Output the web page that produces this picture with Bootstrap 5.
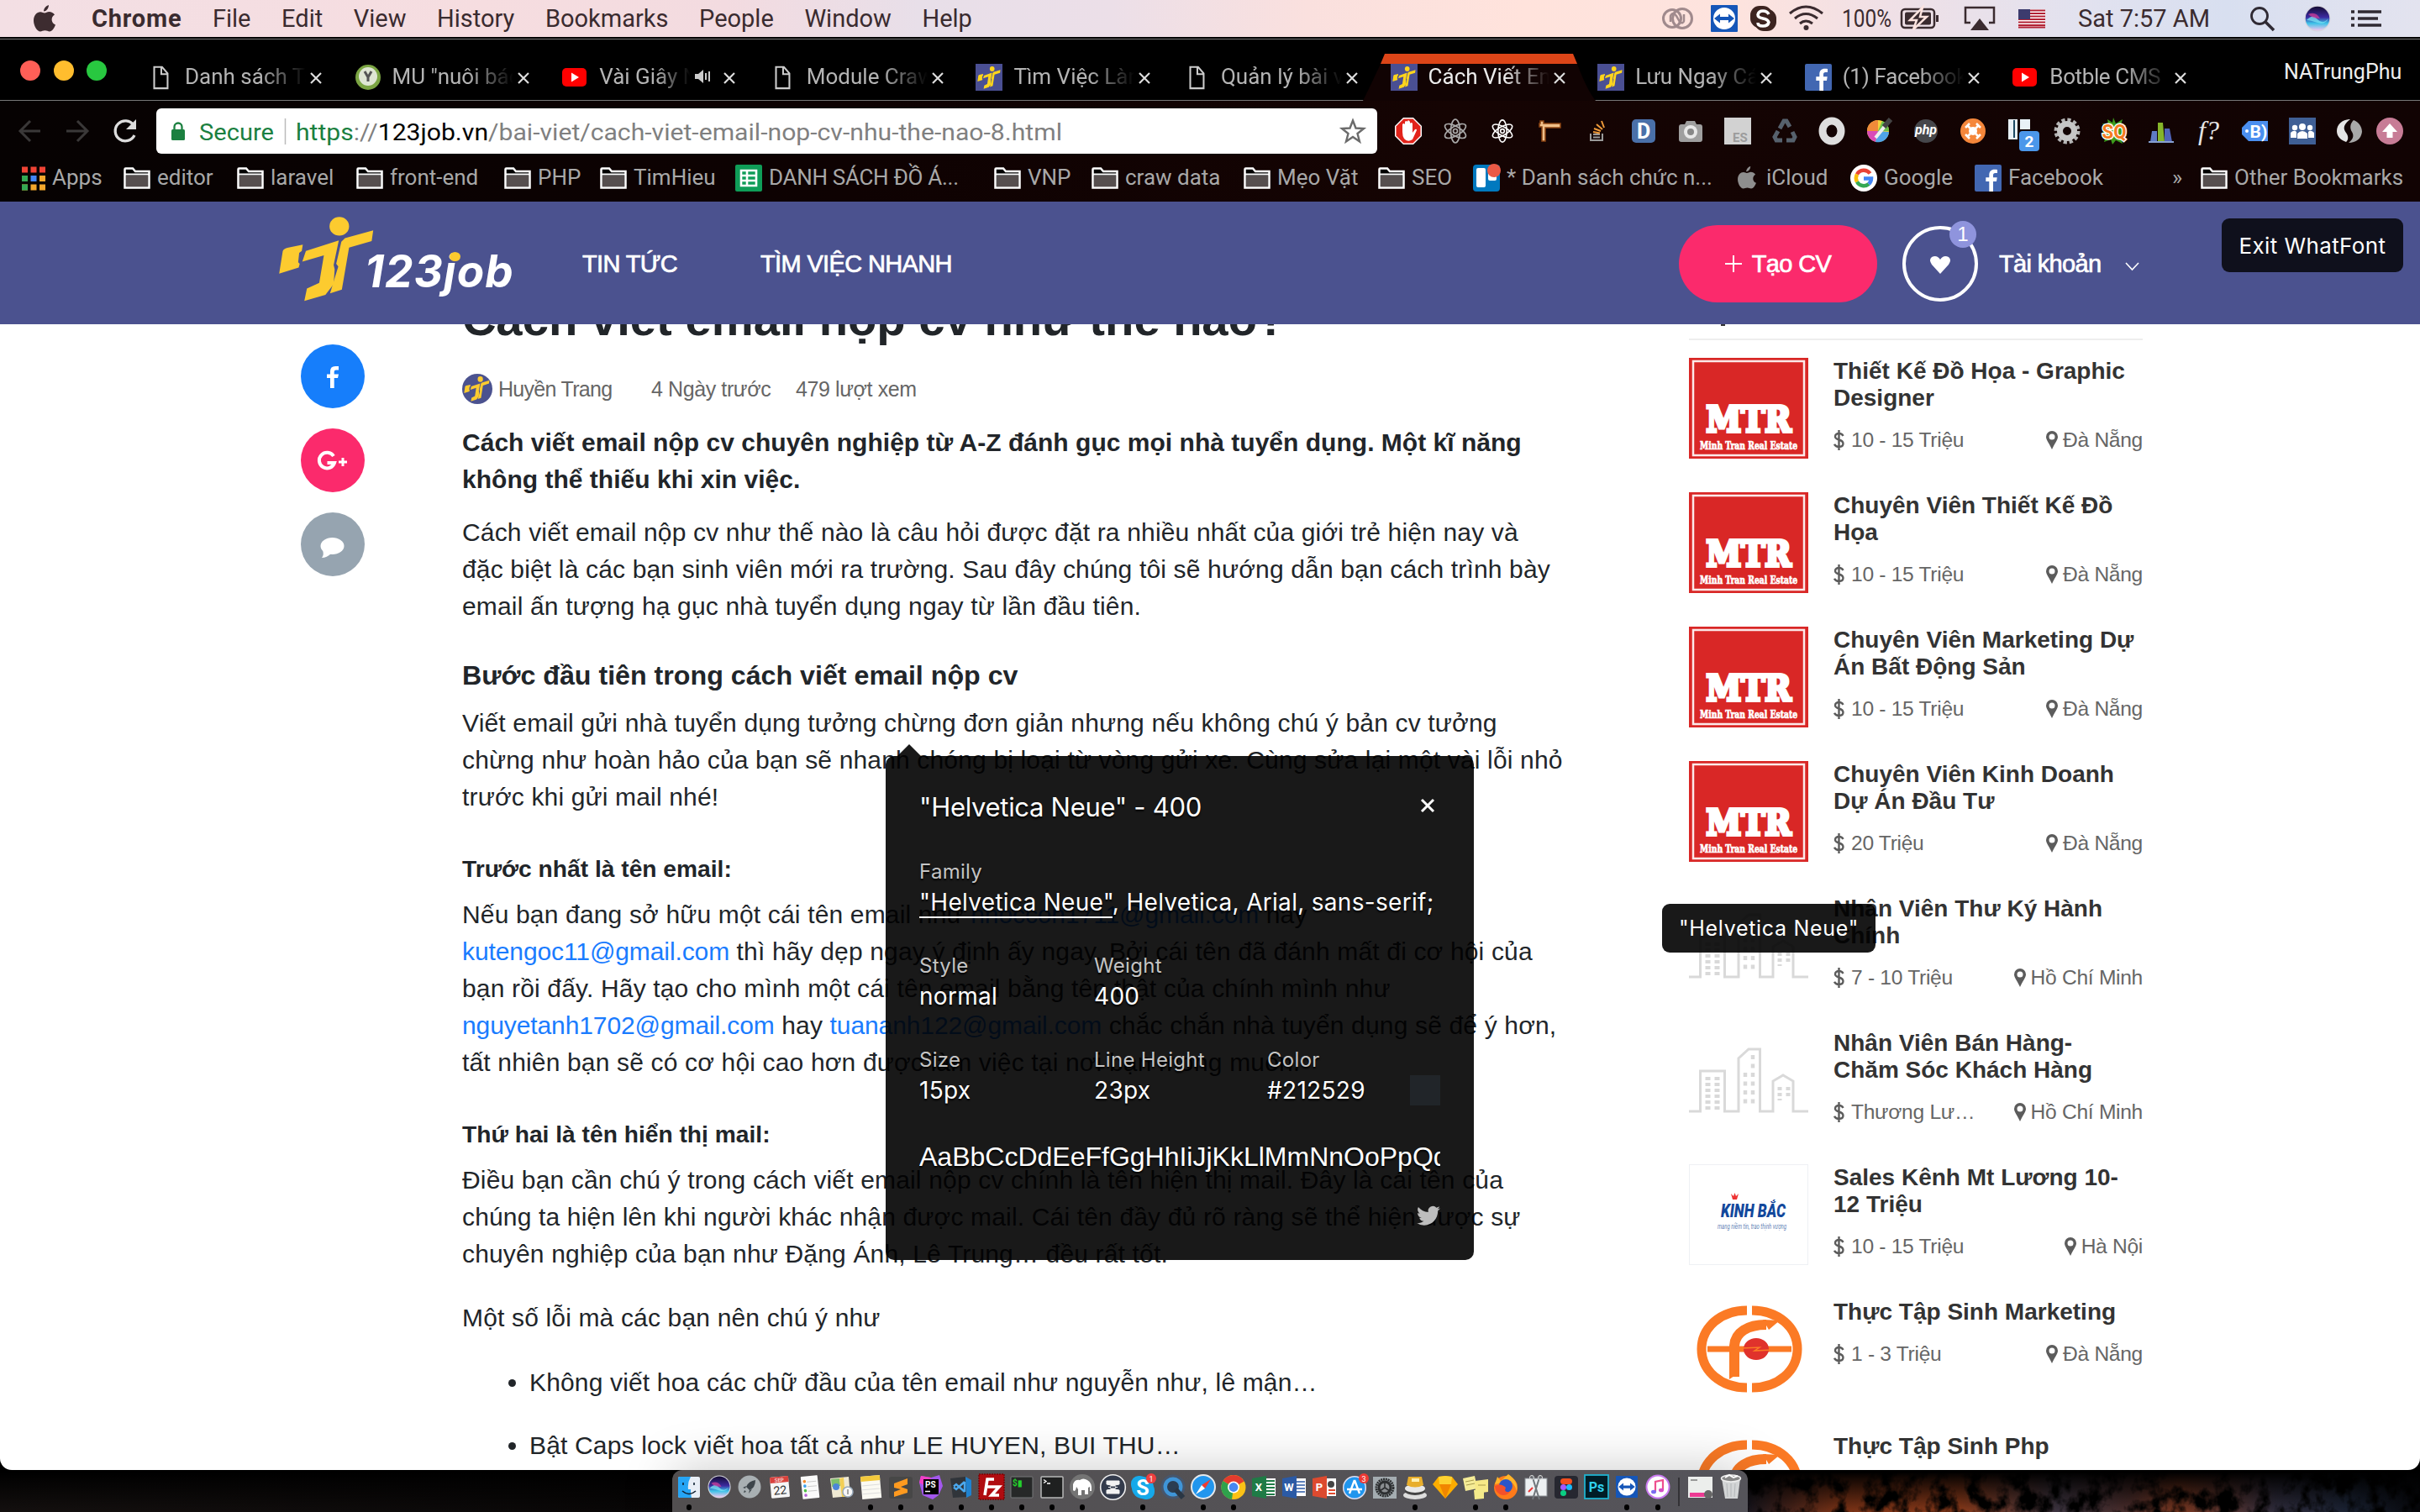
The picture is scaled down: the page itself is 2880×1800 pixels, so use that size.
<!DOCTYPE html>
<html lang="vi">
<head>
<meta charset="utf-8">
<title>Cách viết email nộp cv như thế nào?</title>
<link href="https://cdn.jsdelivr.net/npm/bootstrap@5.3.0/dist/css/bootstrap.min.css" rel="stylesheet">
<style>
html,body{margin:0;width:2880px;height:1800px;overflow:hidden;background:#000}
body{font-family:"Liberation Sans",Arial,sans-serif;color:#212529;line-height:1.2}
svg{display:block;flex:none;overflow:visible}
svg text{font-family:Roboto,Inter,sans-serif}
.sys{font-family:Roboto,Inter,sans-serif}
.nw{white-space:nowrap}
/* menu bar */
.menubar{height:44px;font-size:29px;color:#3a2b2f;padding-left:40px;background:linear-gradient(90deg,#f3dfe4 0,#f6dde0 20%,#f3dbe0 30%,#e8dfe9 38%,#ecdfe8 46%,#fae0de 54%,#ffe3dc 63%,#fde3de 72%,#f0e0e6 78%,#e2e2ef 86%,#d8dff0 92%,#e3e3ef 100%)}
.menubar .menus>span{margin-right:36.6px}
.menubar .menus>span:first-child{letter-spacing:.8px}
/* tabs */
.tabstrip{height:76px;border-top:2px solid #000;position:relative;padding-left:175px;background:#000;box-shadow:inset 0 1px 0 #777,inset 0 -1px 0 #777}
.lights{position:absolute;left:24px;top:26px;gap:15.5px}
.lights i{width:24px;height:24px;border-radius:50%}
.btab{width:246.6px;height:72px;padding-top:20px;position:relative;color:#b4b4b4;font-size:26px}
.btab .tt{width:150px;overflow:hidden;margin-left:13px;margin-top:2px;-webkit-mask-image:linear-gradient(90deg,#000 60%,transparent 96%);mask-image:linear-gradient(90deg,#000 60%,transparent 96%)}
.btab .cl{margin-top:20px;margin-left:-1px}
.btab.on{color:#ececec}
.btab>*{position:relative}
.btab .shape{position:absolute;left:-33px;top:18px}
.user{position:absolute;left:2718px;top:25px;font-size:25px;color:#eee}
/* toolbar */
.browserbar{height:120px;background:linear-gradient(90deg,#060202,#0e0202 35%,#150403 60%,#110303)}
.toolbar{height:72px;padding-left:22px}
.omni{width:1453px;height:54px;background:#fff;border-radius:6px;font-size:28px;padding:0 12px 0 17px;color:#808080}
.exts{gap:24px;margin-left:21px}
.exts svg:last-child{margin-left:-8px}
.marks{height:39px;color:#a8a8a8;font-size:26px;padding-left:26px;position:relative}
.marks>div{display:flex;align-items:center;gap:8px;flex:none;white-space:nowrap}
.marks>div:nth-child(1){width:121px}.marks>div:nth-child(2){width:135px}.marks>div:nth-child(3){width:142px}
.marks>div:nth-child(4){width:176px}.marks>div:nth-child(5){width:114px}.marks>div:nth-child(6){width:161px}
.marks>div:nth-child(7){width:308px}.marks>div:nth-child(8){width:116px}.marks>div:nth-child(9){width:181px}
.marks>div:nth-child(10){width:160px}.marks>div:nth-child(11){width:113px}.marks>div:nth-child(12){width:315px}
.marks>div:nth-child(13){width:134px}.marks>div:nth-child(14){width:148px}.marks>div:nth-child(15){width:235px}
.marks>div:nth-child(16){width:34px}
/* site */
.sitehead{height:146px;background:#4b528f;color:#fff;font-size:29px;padding-left:331px}
.sitehead .navt{-webkit-text-stroke:.7px #fff;letter-spacing:-.65px;position:relative;padding-top:2px}
.brandname{font:italic 700 53px Inter,sans-serif;letter-spacing:1.2px;margin-left:-12px;margin-top:20px;line-height:60px;width:259px}
.brandname span{position:relative}
.brandname span:after{content:"";position:absolute;left:7px;top:9px;width:13px;height:11px;border-radius:50%;background:#fccb2f}
.cv{width:236px;height:92px;border-radius:46px;background:#fb2a6c;gap:12px;margin-top:1px}
.fav{width:90px;height:90px;border:4px solid #fff;border-radius:50%;position:relative;margin-left:30px;margin-top:2px}
.fav b{position:absolute;right:-2px;top:-10px;width:32px;height:32px;border-radius:50%;background:#8f94dd;font:400 24px/32px "Liberation Sans",sans-serif;text-align:center}
.exitwf{position:absolute;left:2644px;top:20px;width:216px;height:64px;border-radius:9px;background:#0f101c;font:400 26px/66px Inter,sans-serif;letter-spacing:.4px;text-align:center;white-space:nowrap}
.page{height:1364px;background:#fff;border-radius:0 0 14px 14px;position:relative;overflow:hidden}
.soc{padding:24px 0 0 0;margin-left:358px;width:192px;gap:24px}
.soc i{width:76px;height:76px;border-radius:50%}
.art{width:1460px;font-size:30px;line-height:44px;white-space:nowrap;letter-spacing:.16px}
.art .ttl{font-size:56.200px;font-weight:700;line-height:60px;margin-top:-36px;letter-spacing:0}
.art .meta{font-size:25px;color:#666;height:36px;margin-top:35px;letter-spacing:-.4px}
.art p{margin:0}.art a{color:#1a7cff;text-decoration:none;letter-spacing:-.1px}
.art h3{font-size:32.200px;line-height:44px;font-weight:700;margin:38px 0 13px;letter-spacing:0}
.art h4{font-size:28.200px;line-height:44px;font-weight:700;margin:41px 0 11px;letter-spacing:0}
.art ul{margin:33px 0 0;padding-left:80px}.art li{margin-bottom:31px}
.side{width:540px;padding-top:17px;position:relative}
.side:before{content:"";position:absolute;left:38px;top:0;width:5px;height:2px;background:#333}
.side .rule{height:2px;background:#eee;margin-bottom:21px}
.job{height:160px}
.job .lg{width:142px;height:120px;margin-right:30px}
.job h5{font-size:28px;line-height:32px;font-weight:700;color:#333;margin:0 0 18px;white-space:nowrap}
.job .inf{font-size:24.600px;line-height:32px;color:#666;width:368px;white-space:nowrap;letter-spacing:-.3px}
/* inspector */
.wf{position:absolute;left:1054px;top:514px;width:700px;height:600px;background:rgba(0,0,0,.9);border-radius:10px;color:#fff;padding:40px 40px 0;font:400 28px/36px Inter,sans-serif;letter-spacing:.3px;text-shadow:0 2px 2px #000}
.wf:before{content:"";position:absolute;left:14px;top:-14px;border:solid transparent;border-width:0 14px 14px;border-bottom-color:rgba(0,0,0,.9)}
.wf .lb{font-size:24px;color:#c4c4c4;line-height:36px}
.wf .c1{width:208px}.wf .c2{width:206px}
.wf .abc{font:400 32px/40px "Liberation Sans",sans-serif;letter-spacing:0;overflow:hidden;width:620px;white-space:nowrap}
.swt{width:36px;height:36px;background:#212529}
.wft{position:absolute;left:1978px;top:690px;width:254px;height:58px;border-radius:9px;background:rgba(0,0,0,.9);color:#fff;font:400 25px/58px Inter,sans-serif;letter-spacing:.7px;text-align:center;white-space:nowrap}
/* dock */
.desk{height:50px;position:relative;background:#000}
.desk .wall{position:absolute;left:0;top:0}
.dock{position:absolute;left:800px;top:0;width:1280px;height:60px;background:linear-gradient(90deg,#524f50,#55545a);border-radius:12px 12px 0 0;box-shadow:0 0 60px rgba(0,0,0,.22);padding:5px 0 0 2px}
.dk{width:36.030px;height:50px}
.dk.run:after{content:"";width:6px;height:7px;border-radius:3px;background:#000;margin-top:5px}
</style>
<script src="https://cdn.jsdelivr.net/npm/bootstrap@5.3.0/dist/js/bootstrap.bundle.min.js"></script>
</head>
<body>
<svg width="0" height="0" style="position:absolute"><defs>
<symbol id="man" viewBox="50 84 188 300" preserveAspectRatio="none"><ellipse cx="169" cy="118" rx="19" ry="33"/><path d="M98 183L68 194Q60 198 59 206L52 285L90 264L92 250L89 245L91 212L96 205z"/><path d="M168 168L104 205L97 243L139 221L130 318L106 338L101 382L142 360L158 322L160 270L158 255z"/><path d="M235 132L180 160L173 172L163 250L167 260L151 355L174 342L188 193L232 170z"/></symbol>
<symbol id="fold" viewBox="0 0 32 26"><path d="M1.5 24.500V2.500Q1.500 1.500 2.500 1.500H11L14 5H30.500V24.500z" fill="#000" stroke="#fff" stroke-width="2.500"/><path d="M3 10H29V23H3z" fill="#564f4f"/><path d="M2 8.500H30" stroke="#fff" stroke-width="2"/></symbol>
<symbol id="doc" viewBox="0 0 32 32"><path d="M8 3H18L25 11V30H8z M17 3V12H25" fill="none" stroke="#ccc" stroke-width="2.200"/></symbol>
<symbol id="yt" viewBox="0 0 32 32"><rect x="1" y="5" width="29" height="22" rx="5" fill="#f00"/><path d="M12 10.500L21 16L12 21.500z" fill="#fff"/></symbol>
<symbol id="fbk" viewBox="0 0 32 32"><rect width="32" height="32" rx="2" fill="#4267b2"/><path d="M22 32V20H26L26.700 15.300H22V12.500C22 11 22.700 10 24.500 10H27V6C26 5.800 25 5.700 23.600 5.700C19.800 5.700 17.300 8 17.300 12V15.300H13.300V20H17.300V32z" fill="#fff"/></symbol>
<symbol id="job" viewBox="0 0 32 32"><rect width="32" height="32" fill="#4a4f93"/><svg x="2" y="3" width="28" height="27"><use href="#man" fill="#ffd51c" width="28" height="27"/></svg></symbol>
<symbol id="x" viewBox="0 0 14 14"><path d="M1 1L13 13M13 1L1 13" stroke="#ddd" stroke-width="2.200"/></symbol>
<symbol id="apl" viewBox="0 0 26 32"><path d="M18 0C18 4 15 7.500 12 7.500C12 4 15 .8 18 0zM13 9.500C14.500 9.500 16 8 18.500 8C21 8 23.500 9.300 25 11.500C20 14.500 20.800 21.500 26 23.500C24.500 27.500 22 31.500 19 31.500C17 31.500 16 30.300 13.500 30.300C11 30.300 10 31.500 8 31.500C4 31.500 0 24.500 0 18.500C0 12 4 8.200 8 8.200C10.300 8.200 12 9.500 13 9.500z"/></symbol>
<symbol id="rct" viewBox="0 0 32 32"><g fill="none" stroke-width="1.700"><ellipse cx="16" cy="16" rx="14" ry="5.500" transform="rotate(90 16 16)"/><ellipse cx="16" cy="16" rx="14" ry="5.500" transform="rotate(30 16 16)"/><ellipse cx="16" cy="16" rx="14" ry="5.500" transform="rotate(150 16 16)"/><circle cx="16" cy="16" r="2.500"/></g></symbol>
<symbol id="tv" viewBox="0 0 32 32"><rect width="32" height="32" rx="1" fill="#1556b8"/><circle cx="16" cy="16" r="13" fill="#fff"/><path d="M4 16L11 10.500V14H21V10.500L28 16L21 21.500V18H11V21.500z" fill="#1556b8"/></symbol>
<linearGradient id="sg" x1="0" y1="0" x2="0" y2="1"><stop offset="0" stop-color="#140b33"/><stop offset=".45" stop-color="#3c2ba0"/><stop offset=".7" stop-color="#3cc3e8"/><stop offset="1" stop-color="#f4c4ee"/></linearGradient>
<symbol id="siri" viewBox="0 0 32 32"><circle cx="16" cy="16" r="15.500" fill="#d6d6df"/><circle cx="16" cy="16" r="14.300" fill="url(#sg)"/><path d="M3 18Q10 10 16 17T29 16Q25 24 16 21T3 18" fill="#7be6f4" opacity=".75"/><path d="M5 11Q14 7 19 16Q10 16 5 11" fill="#d8419b" opacity=".7"/></symbol>
<symbol id="mtr" viewBox="0 0 142 120"><rect width="142" height="120" fill="#d92726"/><rect x="5" y="4" width="132" height="112" fill="none" stroke="#fff" stroke-width="2.500" opacity=".9"/><g fill="#fff" text-anchor="middle" style="font-weight:700"><text x="71" y="88" font-size="42" textLength="101" lengthAdjust="spacingAndGlyphs" stroke="#fff" stroke-width="4" style="font-family:'DejaVu Serif',serif">MTR</text><text x="71" y="109" font-size="12" textLength="116" lengthAdjust="spacingAndGlyphs" stroke="#fff" stroke-width=".7" style="font-family:'DejaVu Serif',serif">Minh Tran Real Estate</text></g></symbol>
<symbol id="bld" viewBox="0 0 142 120"><g fill="none" stroke="#d9d9d9" stroke-width="3"><path d="M0 83H13.500V35H42.500V83H59V20L71 9H84.500V83H100V47L112 40L124 47V83H142"/></g><g fill="none" stroke="#d9d9d9" stroke-dasharray="4 3"><path d="M22.500 42V82M33.500 42V82" stroke-width="6"/><path d="M67 37V76M76 16V76" stroke-width="4.500" stroke-dasharray="5 5.500"/><path d="M108 54V70M118 54V66" stroke-width="5"/></g></symbol>
<symbol id="ff" viewBox="0 0 142 120"><g fill="none" stroke="#fb7a25"><path d="M69 14C38 14 15 34 15 60S38 106 69 106M75 14C106 14 129 34 129 60S106 106 75 106" stroke-width="11"/><path d="M22 60H122" stroke-width="7"/><path d="M54 93V56C55 40 70 31 92 31" stroke-width="12"/></g><path d="M48 96L60 88V80H48zM88 25L108 26L95 37z" fill="#fb7a25"/><ellipse cx="80" cy="60" rx="15" ry="13" fill="#e0322c"/><path d="M62 59L84 58L78 62L99 61" stroke="#fb7a25" stroke-width="1.500" fill="none"/></symbol>
<symbol id="pin" viewBox="0 0 14 22"><path fill-rule="evenodd" d="M7 0A7 7 0 0 1 14 7C14 10 12 12 7 22C2 12 0 10 0 7A7 7 0 0 1 7 0zM7 3.500A3.500 3.500 0 1 0 7 10.500A3.500 3.500 0 0 0 7 3.500z" fill="#5c5c5c"/></symbol>
<symbol id="usd" viewBox="0 0 13 24"><path d="M11.500 7C10.500 4.700 8.500 4 6.500 4C4 4 2 5.300 2 7.700C2 12.500 11.500 10.500 11.500 16C11.500 18.600 9.300 20 6.500 20C4 20 2 19 1 16.800M6.500 0V24" fill="none" stroke="#5c5c5c" stroke-width="2.400"/></symbol>
</defs></svg>

<header class="menubar sys d-flex align-items-center">
<svg width="26" height="32" fill="#3d2c30"><use href="#apl" width="26" height="32"/></svg>
<div class="menus d-flex nw" style="margin-left:43px"><span class="fw-bold">Chrome</span><span>File</span><span>Edit</span><span>View</span><span>History</span><span>Bookmarks</span><span>People</span><span>Window</span><span>Help</span></div>
<svg class="ms-auto" width="902" height="44" viewBox="1978 0 902 44">
<g fill="none" stroke="#a08a8d" stroke-width="3"><circle cx="1990" cy="22" r="10.500"/><circle cx="2002" cy="22" r="11.500"/><path d="M1988 26V19Q1991 13 1995 19L1999 26Q2003 29 2004 25V17" stroke-width="2.500"/></g>
<svg x="2036" y="6" width="32" height="32"><use href="#tv" width="32" height="32"/></svg>
<rect x="2083" y="7" width="26" height="26" rx="11" fill="#3d2420"/><rect x="2088" y="11" width="26" height="26" rx="11" fill="#3d2420"/><circle cx="2098.500" cy="22" r="13.500" fill="#3d2420"/><path d="M2105 17Q2103 13 2098 13T2092 17.500Q2092 21 2098 22T2105 26.500Q2104 31 2098 31T2092 27" fill="none" stroke="#fff" stroke-width="3.500"/>
<g fill="none" stroke="#3a2b2f" stroke-width="3"><path d="M2130 16Q2149 0 2169 16M2136 22Q2149 11 2163 22M2142 28Q2149 22 2157 28"/></g><circle cx="2149.500" cy="33" r="3" fill="#3a2b2f"/>
<text x="2192" y="32" font-size="29" fill="#3a2b2f" textLength="59" lengthAdjust="spacingAndGlyphs">100%</text>
<g><rect x="2263" y="11" width="39" height="22" rx="4" fill="none" stroke="#3a2b2f" stroke-width="2.500"/><rect x="2267" y="14.500" width="31" height="15" rx="2" fill="#3a2b2f"/><path d="M2304 18H2307V26H2304z" fill="#3a2b2f"/><path d="M2288 9L2273 24H2281L2277 35L2293 20H2285z" fill="#3a2b2f" stroke="#fde3de" stroke-width="2.500"/></g>
<path d="M2345 27H2339V9H2373V27H2367" fill="none" stroke="#3a2b2f" stroke-width="2.500"/><path d="M2356 22L2367 36H2345z" fill="#3a2b2f"/>
<rect x="2402" y="11" width="32" height="22" fill="#fff"/><path d="M2402 12.500H2434M2402 16H2434M2402 19.500H2434M2402 23H2434M2402 26.500H2434M2402 30H2434M2402 32.500H2434" stroke="#b22234" stroke-width="1.800"/><rect x="2402" y="11" width="14" height="12" fill="#3c3b6e"/>
<text x="2473" y="32" font-size="29" fill="#3a2b2f" textLength="157" lengthAdjust="spacingAndGlyphs">Sat 7:57 AM</text>
<circle cx="2689" cy="19" r="9.500" fill="none" stroke="#2f2a33" stroke-width="2.800"/><path d="M2696 26L2706 36" stroke="#2f2a33" stroke-width="3.500"/>
<svg x="2742" y="6" width="32" height="32"><use href="#siri" width="32" height="32"/></svg>
<path d="M2798 14H2802M2806 14H2834M2798 22H2802M2806 22H2830M2798 30H2802M2806 30H2834" stroke="#2f2a33" stroke-width="3.600"/>
</svg>
</header>

<nav class="tabstrip sys d-flex">
<div class="lights d-flex"><i style="background:#ff5f57"></i><i style="background:#ffbd2e"></i><i style="background:#28c840"></i></div>
<div class="btab d-flex nw"><svg width="32" height="50"><use href="#doc" y="11" width="32" height="30"/></svg><span class="tt pt-2">Danh sách Tài</span><svg class="cl" width="14" height="14"><use href="#x"/></svg></div>
<div class="btab d-flex nw"><svg width="32" height="50"><circle cx="16" cy="26" r="15" fill="#7ba543"/><circle cx="16" cy="25" r="11" fill="#dfe6d4"/><path d="M12 19L16 26L20 19M16 25V31" stroke="#555" stroke-width="3" fill="none"/></svg><span class="tt pt-2">MU "nuôi báo</span><svg class="cl" width="14" height="14"><use href="#x"/></svg></div>
<div class="btab d-flex nw"><svg width="32" height="50"><use href="#yt" y="10" width="32" height="32"/></svg><span class="tt pt-2" style="width:113px">Vài Giây Nữa</span><svg width="36" height="50"><path d="M1 22H5L11 17V33L5 28H1z" fill="#ccc"/><path d="M14 21V29M18 19V31" stroke="#ccc" stroke-width="2"/></svg><svg class="cl" width="14" height="14"><use href="#x"/></svg></div>
<div class="btab d-flex nw"><svg width="32" height="50"><use href="#doc" y="11" width="32" height="30"/></svg><span class="tt pt-2">Module Craw</span><svg class="cl" width="14" height="14"><use href="#x"/></svg></div>
<div class="btab d-flex nw"><svg width="32" height="50"><use href="#job" y="10" width="32" height="32"/></svg><span class="tt pt-2">Tìm Việc Làm</span><svg class="cl" width="14" height="14"><use href="#x"/></svg></div>
<div class="btab d-flex nw"><svg width="32" height="50"><use href="#doc" y="11" width="32" height="30"/></svg><span class="tt pt-2">Quản lý bài viết</span><svg class="cl" width="14" height="14"><use href="#x"/></svg></div>
<div class="btab on d-flex nw"><svg class="shape" width="278" height="57"><path d="M0 56Q8 40 21 12L26 0H250L255 12Q266 42 277 56z" fill="#110303"/><path d="M21 12L26 0H250L255 12z" fill="#dd4518"/></svg><svg width="32" height="50"><use href="#job" y="10" width="32" height="32"/></svg><span class="tt pt-2">Cách Viết Email</span><svg class="cl" width="14" height="14"><use href="#x"/></svg></div>
<div class="btab d-flex nw"><svg width="32" height="50"><use href="#job" y="10" width="32" height="32"/></svg><span class="tt pt-2">Lưu Ngay Cách</span><svg class="cl" width="14" height="14"><use href="#x"/></svg></div>
<div class="btab d-flex nw"><svg width="32" height="50"><use href="#fbk" y="10" width="32" height="32"/></svg><span class="tt pt-2" style="letter-spacing:-.3px">(1) Facebook</span><svg class="cl" width="14" height="14"><use href="#x"/></svg></div>
<div class="btab d-flex nw"><svg width="32" height="50"><use href="#yt" y="10" width="32" height="32"/></svg><span class="tt pt-2" style="letter-spacing:-.4px">Botble CMS</span><svg class="cl" width="14" height="14"><use href="#x"/></svg></div>
<div class="user">NATrungPhu</div>
</nav>

<div class="browserbar sys">
<div class="toolbar d-flex align-items-center">
<svg width="164" height="30" fill="none" stroke-width="3"><path d="M14 3L2 15L14 27M2 15H26M70 3L82 15L70 27M82 15H57" stroke="#3a3838"/><path d="M137 8A12 12 0 1 0 138 20" stroke="#ddd" stroke-width="3.300"/><path d="M140 1V13H128z" fill="#ddd"/></svg>
<div class="omni d-flex align-items-center nw">
<svg width="18" height="24"><rect x="1" y="10" width="16" height="13" rx="1.500" fill="#1b8040"/><path d="M4.500 11V7A4.500 4.500 0 0 1 13.500 7V11" stroke="#1b8040" stroke-width="2.300" fill="none"/></svg>
<svg width="136" height="54"><text x="16" y="38" font-size="28.500" fill="#1b8040" textLength="89" lengthAdjust="spacingAndGlyphs">Secure</text><path d="M118.500 12V43" stroke="#bbb" stroke-width="1.500"/></svg>
<svg width="912" height="54"><text x="-5" y="38" font-size="28.500" fill="#808080" textLength="912" lengthAdjust="spacingAndGlyphs"><tspan fill="#1b8040">https</tspan>://<tspan fill="#000">123job.vn</tspan>/bai-viet/cach-viet-email-nop-cv-nhu-the-nao-8.html</text></svg>
<svg class="ms-auto" width="30" height="30" viewBox="2 0 30 30"><path d="M15 2.500L18.500 11.500L28 12L20.500 18L23 27.500L15 22L7 27.500L9.500 18L2 12L11.500 11.500z" fill="none" stroke="#6b6b6b" stroke-width="2.400"/></svg>
</div>
<div class="exts d-flex">
<svg width="32" height="32"><path d="M10 0H22L32 10V22L22 32H10L0 22V10z" fill="#fff"/><path d="M10.500 1.500H21.500L30.500 10.500V21.500L21.500 30.500H10.500L1.500 21.500V10.500z" fill="#e2231a"/><path d="M9 17V8Q10.500 6 12 8V5Q13.500 3 15 5V4Q16.500 2 18 5V7Q19.500 5 21 7V18L24 14Q26 13 26 15L21 26Q15 30 11 25Q9 22 9 17z" fill="#fff"/></svg>
<svg width="32" height="32" stroke="#aaa"><use href="#rct"/></svg>
<svg width="32" height="32" stroke="#fff"><use href="#rct" x="1" y="1" width="30" height="30"/></svg>
<svg width="32" height="32"><path d="M5 4H9V7H29V12H11V28H7V11H4V7H5z" fill="#f0c08a" stroke="#8a4312" stroke-width="1.500"/></svg>
<svg width="32" height="32" fill="none" stroke-width="2"><path d="M9 19V27H23V19M12 23.500H20M12 20H20" stroke="#9a9a9a"/><path d="M12 17L20 18.500M13 13L21 16M16 8L23 14M22 4L25 12" stroke="#ee9a3a"/></svg>
<svg width="32" height="32"><rect x="2" y="2" width="28" height="28" rx="5" fill="#4a70a9"/><text x="16" y="25" text-anchor="middle" font-size="25" font-weight="700" fill="#fff">D</text></svg>
<svg width="32" height="32"><path d="M2 11Q2 8 5 8H9L11 4H21L23 8H27Q30 8 30 11V26Q30 29 27 29H5Q2 29 2 26z" fill="#9f9f9f"/><circle cx="16" cy="17" r="8" fill="#e8e8e8"/><circle cx="16" cy="17" r="4" fill="#888"/></svg>
<svg width="32" height="32"><rect width="32" height="32" fill="#d2d2d2"/><text x="10" y="29" font-size="15" font-weight="700" fill="#9c9c9c">ES</text></svg>
<svg width="32" height="32" fill="none" stroke="#56616d" stroke-width="5"><path d="M10 13L15 4H18L22 11M25 17L28 23L26 27H18M13 27H6L4 23L8 16"/></svg>
<svg width="32" height="32"><ellipse cx="16" cy="16" rx="11" ry="12" fill="none" stroke="#dedede" stroke-width="9"/></svg>
<svg width="32" height="32"><circle cx="15" cy="16" r="13" fill="#f4d23c"/><path d="M15 16V3A13 13 0 0 0 2 16z" fill="#f08a3a"/><path d="M15 16H2A13 13 0 0 0 12 29z" fill="#d94bb8"/><path d="M15 16L12 29A13 13 0 0 0 28 17z" fill="#4fa4e8"/><path d="M15 16L28 16A13 13 0 0 0 20 4z" fill="#6cc24a"/><path d="M29 3L12 24" stroke="#eee" stroke-width="4"/><path d="M30 2L22 11" stroke="#444" stroke-width="6"/></svg>
<svg width="32" height="32"><circle cx="16" cy="16" r="14" fill="#46474b"/><text x="16" y="20" text-anchor="middle" font-size="16" font-weight="700" font-style="italic" fill="#fff">php</text></svg>
<svg width="32" height="32"><circle cx="16" cy="16" r="15" fill="#f5873b"/><path d="M10 10L22 22M22 10L10 22" stroke="#fff" stroke-width="2.500"/><circle cx="16" cy="16" r="5" fill="#fff"/><path d="M7 12L12 7M20 7L25 12M7 20L12 25M20 25L25 20" stroke="#fff" stroke-width="2.500"/></svg>
<svg width="32" height="32"><path d="M2 2H13V26H2zM16 2H28V14H16z" fill="#e8f1f6"/><path d="M9 3V24" stroke="#1c4a63" stroke-width="2"/><rect x="15" y="16" width="24" height="24" rx="4" fill="#4b97ea"/><text x="27" y="35" font-size="19" font-weight="700" text-anchor="middle" fill="#fff">2</text></svg>
<svg width="32" height="32"><circle cx="16" cy="16" r="12.500" fill="none" stroke="#b5b5b5" stroke-width="6" stroke-dasharray="3.900 2.640"/><circle cx="16" cy="16" r="8.500" fill="none" stroke="#c6c6c6" stroke-width="7"/></svg>
<svg width="32" height="32"><path d="M15 0L18 7L26 2L24 9H30L26 16L31 22L24 23L26 31L18 27L14 32L12 26L4 29L6 22L1 19L6 13L2 7L9 8L8 2L14 6z" fill="#3d9b1c"/><text x="16" y="25" font-size="24" font-weight="700" text-anchor="middle" fill="#f47b20" stroke="#fff" stroke-width="3" paint-order="stroke" textLength="29" lengthAdjust="spacingAndGlyphs">SQ</text></svg>
<svg width="32" height="32"><path d="M3 29L5 16H11V29z" fill="#5f7bc4"/><path d="M12 29V6H18L20 29z" fill="#85b52a"/><path d="M20 29V13H26L29 29z" fill="#4f63b8"/><path d="M1 29H31" stroke="#87a0d0" stroke-width="2"/></svg>
<svg width="32" height="32"><text x="4" y="26" font-size="32" font-style="italic" fill="#e5e5e5" style="font-family:'Liberation Serif',serif">f?</text></svg>
<svg width="32" height="32"><path d="M0 12L8 4H31V28H8L0 20z" fill="#4b8ff0"/><circle cx="6" cy="16" r="2" fill="#fff"/><text x="20" y="24" font-size="21" font-weight="700" text-anchor="middle" fill="#fff">B)</text></svg>
<svg width="32" height="32"><rect width="32" height="32" fill="#3f5f95"/><g fill="#fff"><circle cx="16" cy="11" r="4"/><path d="M10 25V19Q16 13 22 19V25z"/><circle cx="7" cy="12" r="3.200"/><path d="M2 24V18Q6 14 9 17V24z"/><circle cx="25" cy="12" r="3.200"/><path d="M30 24V18Q26 14 23 17V24z"/></g></svg>
<svg width="32" height="32"><path d="M17 2C9 8 8 13 12 18C15 22 15 26 12 29C4 26 1 21 1 16C1 8 8 2 17 2z" fill="#e4e4e4"/><path d="M21 3C27 5 31 11 31 17C30 25 24 30 15 30C20 26 22 22 19 17C16 12 17 7 21 3z" fill="#a8a8a8"/></svg>
<svg width="32" height="32"><circle cx="16" cy="16" r="16" fill="#c77c96"/><path d="M16 7L25 17H19.500V24H12.500V17H7z" fill="#fff"/></svg>
</div>
</div>
<div class="marks d-flex align-items-center">
<div><svg width="28" height="28"><g stroke-width="7" stroke-dasharray="7 3.500"><path d="M0 4H28" stroke="#ef4335"/><path d="M0 14.500H28" stroke="#4285f4"/><path d="M0 25H28" stroke="#f3a72c"/></g><path d="M0 11H7V18H0zM0 21.500H7V28.500H0z" fill="#34a853"/><path d="M21 11H28V18H21z" fill="#f3a72c"/></svg>Apps</div>
<div><svg width="32" height="26"><use href="#fold"/></svg>editor</div>
<div><svg width="32" height="26"><use href="#fold"/></svg>laravel</div>
<div><svg width="32" height="26"><use href="#fold"/></svg>front-end</div>
<div><svg width="32" height="26"><use href="#fold"/></svg>PHP</div>
<div><svg width="32" height="26"><use href="#fold"/></svg>TimHieu</div>
<div><svg width="32" height="32"><rect width="32" height="32" rx="2" fill="#0f9d58"/><path d="M7 7H25V25H7z M7 13H25M7 19H25M14 7V25" fill="none" stroke="#fff" stroke-width="2.600"/></svg><span style="letter-spacing:-.3px">DANH SÁCH ĐỒ Á...</span></div>
<div><svg width="32" height="26"><use href="#fold"/></svg>VNP</div>
<div><svg width="32" height="26"><use href="#fold"/></svg>craw data</div>
<div><svg width="32" height="26"><use href="#fold"/></svg>Mẹo Vặt</div>
<div><svg width="32" height="26"><use href="#fold"/></svg>SEO</div>
<div><svg width="32" height="32"><rect width="32" height="32" rx="4" fill="#0079bf"/><rect x="4" y="4" width="11" height="23" rx="2" fill="#fff"/><rect x="18" y="4" width="10" height="15" rx="2" fill="#fff"/><circle cx="25" cy="7" r="8" fill="#eb5a46"/></svg>* Danh sách chức n...</div>
<div><svg width="22" height="27" fill="#8e8e8e"><use href="#apl" width="22" height="27"/></svg><span style="margin-left:4px">iCloud</span></div>
<div><svg width="32" height="32"><circle cx="16" cy="16" r="16" fill="#fff"/><g fill="none" stroke-width="4.500"><path d="M23.500 10.500A9.200 9.200 0 0 0 8 11.500" stroke="#ea4335"/><path d="M8 11.500A9.500 9.500 0 0 0 8 20.500" stroke="#fbbc05"/><path d="M8 20.500A9.200 9.200 0 0 0 22 23" stroke="#34a853"/><path d="M22 23A9 9 0 0 0 25 16.500H16" stroke="#4285f4"/></g></svg>Google</div>
<div><svg width="32" height="32"><use href="#fbk"/></svg>Facebook</div>
<div>»</div>
<div><svg width="32" height="26"><use href="#fold"/></svg>Other Bookmarks</div>
</div>
</div>

<header class="sitehead d-flex align-items-center position-relative nw">
<svg width="115" height="101" fill="#fccb2f" style="margin-top:-10px"><use href="#man" width="115" height="101"/></svg>
<div class="brandname">123<span>job</span></div>
<div class="navt" style="width:212px">TIN TỨC</div>
<div class="navt" style="width:1093px">TÌM VIỆC NHANH</div>
<div class="cv d-flex align-items-center justify-content-center"><svg width="20" height="20" stroke="#fff" stroke-width="2"><path d="M10 0V20M0 10H20"/></svg><span class="navt">Tạo CV</span></div>
<div class="fav"><svg width="82" height="82"><path d="M41 53L31 42Q27 36 31 33Q37 30 41 36Q45 30 51 33Q55 36 51 42z" fill="#fff"/></svg><b>1</b></div>
<div class="navt" style="margin-left:25px">Tài khoản</div>
<svg width="17" height="10" style="margin-left:28px;margin-top:8px"><path d="M1 1L8.500 9L16 1" fill="none" stroke="#fff" stroke-width="1.600"/></svg>
<div class="exitwf">Exit WhatFont</div>
</header>

<main class="page d-flex">
<div class="soc d-flex flex-column flex-shrink-0">
<i style="background:#167efb"><svg width="76" height="76"><path d="M35 52V40H31V35.500H35V32Q35 26 41 26H45V30.500H42Q39.700 30.500 39.700 32.500V35.500H45L44 40H39.700V52z" fill="#fff"/></svg></i>
<i style="background:#fb2a6c"><svg width="76" height="76"><path d="M39 33A9.300 9.300 0 1 0 40 41H31.500" fill="none" stroke="#fff" stroke-width="4"/><path d="M50 35V45M45 40H55" stroke="#fff" stroke-width="3"/></svg></i>
<i style="background:#96a4b0"><svg width="76" height="76"><ellipse cx="37.500" cy="40" rx="14" ry="10" fill="#fff"/><path d="M25 54Q28 50 26 45L36 49Q31 54 25 54z" fill="#fff"/></svg></i>
</div>
<article class="art flex-shrink-0">
<div class="ttl">Cách viết email nộp cv như thế nào?</div>
<div class="meta d-flex align-items-center"><svg width="36" height="36"><circle cx="18" cy="18" r="18" fill="#4b528f"/><use href="#man" fill="#fccb2f" x="2" y="3" width="31" height="30"/></svg><span style="margin-left:7px;width:182px;letter-spacing:-.7px">Huyền Trang</span><span style="width:172px">4 Ngày trước</span><span>479 lượt xem</span></div>
<p class="fw-bold" style="margin:24px 0 19px;letter-spacing:.02px">Cách viết email nộp cv chuyên nghiệp từ A-Z đánh gục mọi nhà tuyển dụng. Một kĩ năng<br>không thể thiếu khi xin việc.</p>
<p>Cách viết email nộp cv như thế nào là câu hỏi được đặt ra nhiều nhất của giới trẻ hiện nay và<br>đặc biệt là các bạn sinh viên mới ra trường. Sau đây chúng tôi sẽ hướng dẫn bạn cách trình bày<br>email ấn tượng hạ gục nhà tuyển dụng ngay từ lần đầu tiên.</p>
<h3>Bước đầu tiên trong cách viết email nộp cv</h3>
<p>Viết email gửi nhà tuyển dụng tưởng chừng đơn giản nhưng nếu không chú ý bản cv tưởng<br>chừng như hoàn hảo của bạn sẽ nhanh chóng bị loại từ vòng gửi xe. Cùng sửa lại một vài lỗi nhỏ<br>trước khi gửi mail nhé!</p>
<h4>Trước nhất là tên email:</h4>
<p>Nếu bạn đang sở hữu một cái tên email như <a href="#">nhoccon1711@gmail.com</a> hay<br><a href="#">kutengoc11@gmail.com</a> thì hãy dẹp ngay ý định ấy ngay. Bởi cái tên đã đánh mất đi cơ hội của<br>bạn rồi đấy. Hãy tạo cho mình một cái tên email bằng tên thật của chính mình như<br><a href="#">nguyetanh1702@gmail.com</a> hay <a href="#">tuananh122@gmail.com</a> chắc chắn nhà tuyển dụng sẽ để ý hơn,<br>tất nhiên bạn sẽ có cơ hội cao hơn được làm việc tại nơi bạn mong muốn.</p>
<h4>Thứ hai là tên hiển thị mail:</h4>
<p>Điều bạn cần chú ý trong cách viết email nộp cv chính là tên hiện thị mail. Đây là cái tên của<br>chúng ta hiện lên khi người khác nhận được mail. Cái tên đầy đủ rõ ràng sẽ thể hiện được sự<br>chuyên nghiệp của bạn như Đặng Ánh, Lê Trung… đều rất tốt.</p>
<p style="margin-top:32px">Một số lỗi mà các bạn nên chú ý như</p>
<ul><li>Không viết hoa các chữ đầu của tên email như nguyễn như, lê mận…</li><li>Bật Caps lock viết hoa tất cả như LE HUYEN, BUI THU…</li></ul>
</article>
<aside class="side flex-shrink-0">
<div class="rule"></div>
<div class="job d-flex"><svg class="lg"><use href="#mtr"/></svg><div><h5>Thiết Kế Đồ Họa - Graphic<br>Designer</h5><div class="inf d-flex align-items-center"><svg width="13" height="24"><use href="#usd"/></svg><span class="ms-2">10 - 15 Triệu</span><svg class="ms-auto" width="14" height="22"><use href="#pin"/></svg><span style="margin-left:6px">Đà Nẵng</span></div></div></div>
<div class="job d-flex"><svg class="lg"><use href="#mtr"/></svg><div><h5>Chuyên Viên Thiết Kế Đồ<br>Họa</h5><div class="inf d-flex align-items-center"><svg width="13" height="24"><use href="#usd"/></svg><span class="ms-2">10 - 15 Triệu</span><svg class="ms-auto" width="14" height="22"><use href="#pin"/></svg><span style="margin-left:6px">Đà Nẵng</span></div></div></div>
<div class="job d-flex"><svg class="lg"><use href="#mtr"/></svg><div><h5>Chuyên Viên Marketing Dự<br>Án Bất Động Sản</h5><div class="inf d-flex align-items-center"><svg width="13" height="24"><use href="#usd"/></svg><span class="ms-2">10 - 15 Triệu</span><svg class="ms-auto" width="14" height="22"><use href="#pin"/></svg><span style="margin-left:6px">Đà Nẵng</span></div></div></div>
<div class="job d-flex"><svg class="lg"><use href="#mtr"/></svg><div><h5>Chuyên Viên Kinh Doanh<br>Dự Án Đầu Tư</h5><div class="inf d-flex align-items-center"><svg width="13" height="24"><use href="#usd"/></svg><span class="ms-2">20 Triệu</span><svg class="ms-auto" width="14" height="22"><use href="#pin"/></svg><span style="margin-left:6px">Đà Nẵng</span></div></div></div>
<div class="job d-flex"><svg class="lg"><use href="#bld" y="14" width="142" height="120"/></svg><div><h5>Nhân Viên Thư Ký Hành<br>Chính</h5><div class="inf d-flex align-items-center"><svg width="13" height="24"><use href="#usd"/></svg><span class="ms-2">7 - 10 Triệu</span><svg class="ms-auto" width="14" height="22"><use href="#pin"/></svg><span style="margin-left:6px">Hồ Chí Minh</span></div></div></div>
<div class="job d-flex"><svg class="lg"><use href="#bld" y="14" width="142" height="120"/></svg><div><h5>Nhân Viên Bán Hàng-<br>Chăm Sóc Khách Hàng</h5><div class="inf d-flex align-items-center"><svg width="13" height="24"><use href="#usd"/></svg><span class="ms-2">Thương Lư…</span><svg class="ms-auto" width="14" height="22"><use href="#pin"/></svg><span style="margin-left:6px">Hồ Chí Minh</span></div></div></div>
<div class="job d-flex"><svg class="lg"><rect x=".5" y=".5" width="141" height="119" fill="#fff" stroke="#eef0f4"/><text x="38" y="63" font-size="22" font-weight="900" font-style="italic" fill="#12489c" textLength="77" lengthAdjust="spacingAndGlyphs">KINH BẮC</text><path d="M50 35L52 42H57L59 35L56 38L54.500 34L53 38z" fill="#e33"/><text x="34" y="77" font-size="9" font-style="italic" fill="#5f7fb5" textLength="82" lengthAdjust="spacingAndGlyphs">mang niềm tin, trao thịnh vượng</text></svg><div><h5>Sales Kênh Mt Lương 10-<br>12 Triệu</h5><div class="inf d-flex align-items-center"><svg width="13" height="24"><use href="#usd"/></svg><span class="ms-2">10 - 15 Triệu</span><svg class="ms-auto" width="14" height="22"><use href="#pin"/></svg><span style="margin-left:6px">Hà Nội</span></div></div></div>
<div class="job d-flex"><svg class="lg"><use href="#ff"/></svg><div><h5>Thực Tập Sinh Marketing</h5><div class="inf d-flex align-items-center"><svg width="13" height="24"><use href="#usd"/></svg><span class="ms-2">1 - 3 Triệu</span><svg class="ms-auto" width="14" height="22"><use href="#pin"/></svg><span style="margin-left:6px">Đà Nẵng</span></div></div></div>
<div class="job d-flex"><svg class="lg"><use href="#ff"/></svg><div><h5>Thực Tập Sinh Php</h5></div></div>
</aside>
<div class="wf">
<div class="d-flex justify-content-between" style="font-size:31px;line-height:42px;margin-bottom:38px;letter-spacing:-.3px"><span>"Helvetica Neue" - 400</span><svg width="16" height="16" style="margin:11px 7px 0"><path d="M1 1L15 15M15 1L1 15" stroke="#fff" stroke-width="3"/></svg></div>
<div class="lb">Family</div><div class="nw"><span style="border-bottom:2px solid #fff">"Helvetica Neue"</span>, Helvetica, Arial, sans-serif;</div>
<div class="d-flex" style="margin-top:40px"><div class="c1"><div class="lb">Style</div>normal</div><div class="c2"><div class="lb">Weight</div>400</div></div>
<div class="d-flex align-items-end" style="margin-top:40px"><div class="c1"><div class="lb">Size</div>15px</div><div class="c2"><div class="lb">Line Height</div>23px</div><div><div class="lb">Color</div>#212529</div><div class="swt ms-auto"></div></div>
<div class="abc" style="margin-top:41px">AaBbCcDdEeFfGgHhIiJjKkLlMmNnOoPpQqRr</div>
<svg class="ms-auto" width="28" height="24" viewBox="0 3.500 24 20" style="margin-top:40px"><path fill="#bdbdbd" d="M23.950 4.570a10 10 0 0 1-2.820.775 4.960 4.960 0 0 0 2.160-2.720c-.95.555-2 .96-3.130 1.185a4.920 4.920 0 0 0-8.380 4.480C7.690 8.100 4.070 6.130 1.640 3.160a4.820 4.820 0 0 0-.67 2.480c0 1.710.87 3.210 2.190 4.100a4.900 4.900 0 0 1-2.230-.62v.06a4.920 4.920 0 0 0 3.950 4.830 5 5 0 0 1-2.210.09 4.940 4.940 0 0 0 4.600 3.420A9.870 9.870 0 0 1 0 19.540a14 14 0 0 0 7.550 2.210c9.050 0 14-7.500 14-13.980 0-.21 0-.42-.02-.63a9.940 9.940 0 0 0 2.460-2.550z"/></svg>
</div>
<div class="wft">"Helvetica Neue"</div>
</main>

<footer class="desk">
<svg class="wall" width="2880" height="50"><defs><filter id="tx" x="0" y="0" width="100%" height="100%"><feTurbulence type="fractalNoise" baseFrequency=".05 .04" numOctaves="4" seed="8"/><feColorMatrix values="0 0 0 0 0  0 0 0 0 0  0 0 0 0 0  4 0 0 0 -1.700"/></filter><linearGradient id="wg"><stop offset="0" stop-color="#14100f"/><stop offset=".27" stop-color="#080606"/><stop offset=".72" stop-color="#14151f"/><stop offset=".76" stop-color="#7c3316"/><stop offset=".81" stop-color="#8a3a1a"/><stop offset=".85" stop-color="#3c3440"/><stop offset=".88" stop-color="#4a2c2a"/><stop offset=".9" stop-color="#7c3820"/><stop offset=".94" stop-color="#2f2c3c"/><stop offset=".97" stop-color="#1a2233"/><stop offset="1" stop-color="#07080c"/></linearGradient><linearGradient id="wf" x1="0" y1="0" x2="0" y2="1"><stop offset=".05" stop-color="#000"/><stop offset="1" stop-color="#000" stop-opacity="0"/></linearGradient></defs><rect width="2880" height="50" fill="url(#wg)"/><rect x="2080" width="800" height="50" filter="url(#tx)"/><rect width="2880" height="50" fill="url(#wf)"/></svg>
<div class="dock d-flex">
<div class="dk run d-flex flex-column align-items-center"><svg width="28" height="31" viewBox="0 0 28 31"><rect x="1" y="3" width="26" height="25" rx="2" fill="#e8eef6"/><path d="M3 3H16Q12 10 13 18H16Q16 24 17 28H3Q1 28 1 26V5Q1 3 3 3z" fill="#26a5f5"/><path d="M7 10V13M20 10V13M6 20Q14 27 22 20" stroke="#123" stroke-width="1.600" fill="none"/></svg></div>
<div class="dk d-flex flex-column align-items-center"><svg width="28" height="31"><use href="#siri" y="1" width="28" height="28"/></svg></div>
<div class="dk d-flex flex-column align-items-center"><svg width="28" height="31"><circle cx="14" cy="15" r="13.500" fill="#a9b0b3"/><path d="M21 7Q13 8 10 15L14 19Q21 16 21 7zM10 14L6 16L9 17zM14 19L13 23L17 18z" fill="#3d454b"/><path d="M8 19L7 22L10 21z" fill="#3d454b"/></svg></div>
<div class="dk d-flex flex-column align-items-center"><svg width="28" height="31"><g transform="rotate(-5 14 15)"><rect x="3" y="3" width="22" height="25" rx="1.500" fill="#f6f6f6"/><rect x="3" y="3" width="22" height="7" fill="#d8413c"/><text x="14" y="24" font-size="14" text-anchor="middle" fill="#333">22</text><text x="14" y="9" font-size="6" text-anchor="middle" fill="#fff">SEP</text></g></svg></div>
<div class="dk d-flex flex-column align-items-center"><svg width="28" height="31"><g transform="rotate(-6 14 15)"><rect x="4" y="2" width="20" height="27" rx="1" fill="#fafafa"/><circle cx="8" cy="8" r="1.800" fill="#f58a2e"/><circle cx="8" cy="13.500" r="1.800" fill="#3aa0ee"/><circle cx="8" cy="19" r="1.800" fill="#4fc147"/><circle cx="8" cy="24.500" r="1.800" fill="#b25fd6"/><path d="M11 9H22M11 14.500H22M11 20H22" stroke="#ccc"/></g></svg></div>
<div class="dk d-flex flex-column align-items-center"><svg width="28" height="31"><path d="M2 5L24 3L26 26L5 28z" fill="#efe9d3"/><path d="M3 6L13 5L14 14L4 15z" fill="#7fc06d"/><path d="M13 5L18 4L20 27L16 27z" fill="#f3cf55"/><circle cx="9" cy="15" r="4" fill="#4d86d8"/><circle cx="23" cy="21" r="6" fill="#f7f7f7" stroke="#9ab" stroke-width="1.500"/><path d="M23 18V24" stroke="#555"/></svg></div>
<div class="dk run d-flex flex-column align-items-center"><svg width="28" height="31"><g transform="rotate(-5 14 15)"><rect x="3" y="2" width="23" height="27" fill="#fbfaf3"/><rect x="3" y="2" width="23" height="6" fill="#f3c93c"/><path d="M4 13H25M4 18H25M4 23H25" stroke="#ddd"/></g></svg></div>
<div class="dk run d-flex flex-column align-items-center"><svg width="28" height="31"><rect x="0" y="3" width="28" height="26" rx="3" fill="#474747"/><path d="M6 11L22 5V12L14 15L22 18V22L6 27V21L14 18L6 16z" fill="#ff9a1f"/></svg></div>
<div class="dk run d-flex flex-column align-items-center"><svg width="30" height="31"><path d="M3 2L15 4L25 1L29 14L24 25L17 30L5 25L1 10z" fill="#a357ee"/><path d="M3 2L15 4L10 15L1 10z" fill="#f23ec4"/><rect x="6" y="6" width="18" height="18" fill="#000"/><text x="8" y="15.500" font-size="10" font-weight="700" fill="#fff">PS</text><path d="M8 20.500H14" stroke="#fff" stroke-width="1.500"/></svg></div>
<div class="dk run d-flex flex-column align-items-center"><svg width="28" height="31"><path d="M1 5L19 3L21 27L4 28z" fill="#30343a"/><path d="M19 3L26 7V25L20 28z" fill="#1f82d0"/><path d="M18 9L8 18L5 15.500M18 21L8 12L5 14.500M18 9V21" stroke="#4aa8ee" stroke-width="2.400" fill="none"/></svg></div>
<div class="dk run d-flex flex-column align-items-center"><svg width="30" height="31"><rect width="30" height="30" fill="#b00c10" stroke="#7d0406" stroke-width="1.500" stroke-dasharray="2 1"/><path d="M7 25L10 6H18M8 15H16M15 15H24L15 25H24" fill="none" stroke="#fff" stroke-width="3.600"/></svg></div>
<div class="dk run d-flex flex-column align-items-center"><svg width="28" height="31"><rect x="1" y="3" width="26" height="25" rx="1" fill="#262828" stroke="#77797a"/><text x="3" y="14" font-size="10" font-weight="700" fill="#23d12c">$▮</text></svg></div>
<div class="dk run d-flex flex-column align-items-center"><svg width="28" height="31"><rect x="1" y="3" width="26" height="25" rx="1" fill="#1f2020" stroke="#b8b8b8" stroke-width="1.500"/><path d="M4 6.500L7 8.500L4 10.500M8 11H12" stroke="#fff" stroke-width="1.300" fill="none"/></svg></div>
<div class="dk run d-flex flex-column align-items-center"><svg width="30" height="31"><circle cx="15" cy="15" r="15" fill="#747474"/><path d="M4 19V12Q6 6 12 7Q16 4 21 7Q27 10 26 20H24V15L22 16V24H18V19H14V25H10V18L8 15Q7 22 4 19z" fill="#fff"/></svg></div>
<div class="dk d-flex flex-column align-items-center"><svg width="31" height="31"><circle cx="15.500" cy="15.500" r="14.800" fill="#333b4c" stroke="#eee" stroke-width="1.600"/><path d="M8 8H23V12L18 13V18L23 19V23H8V19L13 18V13L8 12zM10 15.500H21" fill="#f2f2f2" stroke="#f2f2f2"/><path d="M13 15.500H18" stroke="#333b4c" stroke-width="2"/></svg></div>
<div class="dk run d-flex flex-column align-items-center"><svg width="30" height="31"><rect x="1" y="2" width="20" height="20" rx="9" fill="#16a9ea"/><rect x="9" y="10" width="20" height="20" rx="9" fill="#16a9ea"/><circle cx="15" cy="16" r="13" fill="#16a9ea"/><text x="15" y="25" text-anchor="middle" font-size="25" font-weight="700" fill="#fff">S</text><circle cx="25" cy="5" r="6" fill="#ef3e3e"/><text x="25" y="8.500" font-size="9" text-anchor="middle" fill="#fff">1</text></svg></div>
<div class="dk d-flex flex-column align-items-center"><svg width="28" height="31"><circle cx="14" cy="15" r="9.500" fill="#2b3d52" stroke="#3f95d8" stroke-width="5"/><circle cx="14" cy="15" r="13" fill="none" stroke="#46566d" stroke-width="3"/><path d="M17 18L26 28" stroke="#2a3644" stroke-width="6"/></svg></div>
<div class="dk run d-flex flex-column align-items-center"><svg width="30" height="31"><circle cx="15" cy="15" r="14" fill="#2296ee" stroke="#e6e9ec" stroke-width="2"/><path d="M24 6L17 17L13 13z" fill="#f23b30"/><path d="M6 24L17 17L13 13z" fill="#fff"/></svg></div>
<div class="dk run d-flex flex-column align-items-center"><svg width="30" height="31" viewBox="0 0 30 31"><circle cx="15" cy="15.500" r="14.500" fill="#fbc116"/><path d="M15 15.500L2.500 8A14.500 14.500 0 0 1 27.600 8.500z" fill="#e23b2e"/><path d="M15 15.500L2.500 8A14.500 14.500 0 0 0 13 30z" fill="#2fa24c"/><circle cx="15" cy="15.500" r="7" fill="#fff"/><circle cx="15" cy="15.500" r="5.400" fill="#4688f1"/></svg></div>
<div class="dk d-flex flex-column align-items-center"><svg width="28" height="31"><rect x="14" y="5" width="14" height="21" fill="#fff"/><path d="M17 8H27M17 12H27M17 16H27M17 20H27M17 24H27" stroke="#1f7b46" stroke-width="2"/><path d="M0 5L17 2V29L0 26z" fill="#1f7b46"/><text x="8" y="20" text-anchor="middle" font-size="13" font-weight="700" fill="#fff">X</text></svg></div>
<div class="dk d-flex flex-column align-items-center"><svg width="28" height="31"><rect x="14" y="5" width="14" height="21" fill="#fff"/><path d="M17 9H27M17 13H27M17 17H27M17 21H27" stroke="#2b5aa5" stroke-width="1.500"/><path d="M0 5L17 2V29L0 26z" fill="#2b5aa5"/><text x="8" y="20" text-anchor="middle" font-size="13" font-weight="700" fill="#fff">W</text></svg></div>
<div class="dk d-flex flex-column align-items-center"><svg width="28" height="31"><rect x="14" y="5" width="14" height="21" fill="#fff"/><circle cx="22" cy="12" r="4" fill="#444"/><path d="M19 19H27M19 23H27" stroke="#e04a2f" stroke-width="2"/><path d="M0 5L17 2V29L0 26z" fill="#dc4a2f"/><text x="8" y="20" text-anchor="middle" font-size="13" font-weight="700" fill="#fff">P</text></svg></div>
<div class="dk d-flex flex-column align-items-center"><svg width="30" height="31"><circle cx="15" cy="16" r="13.300" fill="#1f95ee" stroke="#dde" stroke-width="1.500"/><path d="M15 7L9 23M15 7L21 23M6 18H24" stroke="#fff" stroke-width="2.400"/><circle cx="26" cy="5" r="6" fill="#ee3a35"/><text x="26" y="8.500" font-size="9" text-anchor="middle" fill="#fff">3</text></svg></div>
<div class="dk d-flex flex-column align-items-center"><svg width="28" height="31"><rect x="0" y="3" width="28" height="26" fill="#a4acb1"/><circle cx="14" cy="16" r="10" fill="none" stroke="#2c2e30" stroke-width="3" stroke-dasharray="2 .8"/><circle cx="14" cy="16" r="7" fill="#8a8d90" stroke="#2c2e30" stroke-width="3"/><path d="M14 16V9M14 16L8 20M14 16L20 20" stroke="#2c2e30" stroke-width="1.600"/></svg></div>
<div class="dk run d-flex flex-column align-items-center"><svg width="28" height="31"><ellipse cx="14" cy="25" rx="14" ry="5" fill="#ddd"/><ellipse cx="14" cy="20" rx="12" ry="5" fill="#444"/><ellipse cx="14" cy="17" rx="12" ry="5" fill="#e8e8e8"/><path d="M6 3H22L24 13Q14 18 4 13z" fill="#e8ae2c"/><path d="M10 5H19V9H10z" fill="#fff0b0"/></svg></div>
<div class="dk d-flex flex-column align-items-center"><svg width="30" height="31"><path d="M7 3L15 2L23 3L30 12L15 29L0 12z" fill="#fdad00"/><path d="M7 3L15 2L23 3L22 12H8z" fill="#fdd231"/><path d="M8 12H22L15 29z" fill="#ea6c00" opacity=".6"/></svg></div>
<div class="dk run d-flex flex-column align-items-center"><svg width="30" height="31"><path d="M0 5L14 2L17 17L3 20z" fill="#f5ec97"/><path d="M14 8L30 6V21L15 23z" fill="#f7e987"/><path d="M13 19L25 18V29L14 30z" fill="#f3ea8b"/><path d="M3 9L13 7M4 13L14 11M18 13H27" stroke="#a89a4c"/></svg></div>
<div class="dk run d-flex flex-column align-items-center"><svg width="30" height="31"><circle cx="15" cy="16" r="14" fill="#ff7a1a"/><path d="M2 12L5 3L9 8L18 0Q30 8 28 20Q26 12 20 8z" fill="#ffb52a"/><circle cx="15" cy="14" r="8" fill="#2b55c8"/><path d="M2 14Q10 10 15 16Q12 22 20 21Q15 27 8 24Q2 20 2 14z" fill="#f5512a"/></svg></div>
<div class="dk d-flex flex-column align-items-center"><svg width="28" height="31"><rect x="1" y="5" width="26" height="21" fill="#edf0f2" stroke="#8a8f95"/><path d="M9 1L18 30M19 1L10 30" stroke="#70767b" stroke-width="2"/><circle cx="9" cy="4" r="2.500" fill="none" stroke="#ddd"/><circle cx="19" cy="4" r="2.500" fill="none" stroke="#ddd"/><path d="M5 21L10 16" stroke="#e33" stroke-width="2"/></svg></div>
<div class="dk d-flex flex-column align-items-center"><svg width="28" height="31"><rect x="0" y="2" width="28" height="27" rx="4" fill="#262730"/><rect x="7" y="5" width="14" height="7" rx="3.500" fill="#f24e1e"/><rect x="7" y="12" width="7" height="7" rx="3.500" fill="#a259ff"/><circle cx="17.500" cy="15.500" r="3.500" fill="#1abcfe"/><rect x="7" y="19" width="7" height="7" rx="3.500" fill="#0acf83"/></svg></div>
<div class="dk d-flex flex-column align-items-center"><svg width="30" height="31"><rect x="1" y="1" width="28" height="28" fill="#001d26" stroke="#1fb2cf" stroke-width="1.800"/><text x="15" y="21" text-anchor="middle" font-size="16" font-weight="700" fill="#2fd0ee">Ps</text></svg></div>
<div class="dk run d-flex flex-column align-items-center"><svg width="28" height="31"><use href="#tv" x="1" y="2" width="26" height="26"/></svg></div>
<div class="dk run d-flex flex-column align-items-center"><svg width="30" height="31"><circle cx="15" cy="15" r="13.500" fill="#fff" stroke="#c97af0" stroke-width="2"/><path d="M12 21V9L21 7V19" fill="none" stroke="#ee4f8e" stroke-width="2.200"/><ellipse cx="10" cy="21" rx="3" ry="2.300" fill="#7b6cf0"/><ellipse cx="19" cy="19" rx="3" ry="2.300" fill="#d44cc6"/></svg></div>
<div style="width:2px;height:34px;background:#333236;margin:4px 7px 0 6px"></div>
<div class="dk d-flex flex-column align-items-center"><svg width="32" height="31"><rect x="1" y="3" width="29" height="25" fill="#eceeec"/><path d="M3 22H22V27H3z" fill="#ec3a93"/><circle cx="25" cy="24" r="5" fill="#666"/><path d="M4 7H12" stroke="#444"/></svg></div>
<div class="dk d-flex flex-column align-items-center"><svg width="28" height="31"><path d="M3 5H25L22 29H7z" fill="#d3d5d6"/><ellipse cx="14" cy="5" rx="11.500" ry="4" fill="#888" stroke="#eee" stroke-width="1.500"/><path d="M7 4L12 1L17 4L22 2" stroke="#fff" stroke-width="2" fill="none"/><path d="M9 11L10 27M14 11V27M19 11L18 27" stroke="#b4b7b9"/></svg></div>
</div>
</footer>
</body>
</html>
